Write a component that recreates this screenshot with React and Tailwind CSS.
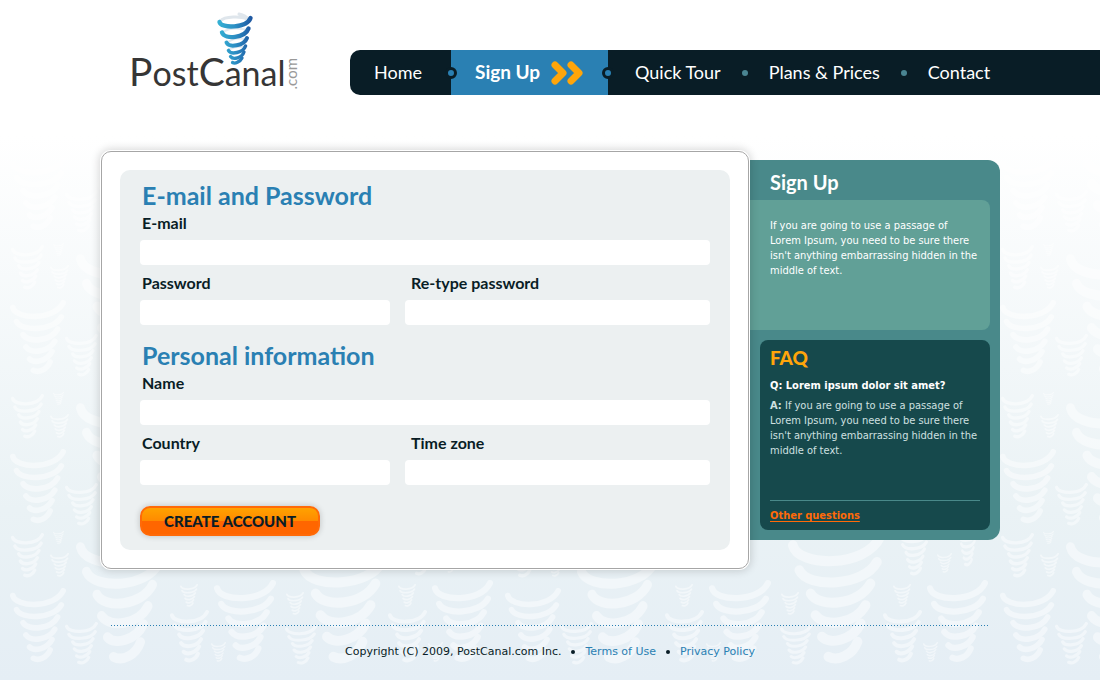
import React from "react";

const SWIRL = [
  "M3 8 C6 21 48 22 57 3",
  "M7 23 C12 34 47 33 55 18",
  "M14 37 C19 46 44 44 51 31",
  "M17 50 C23 58 42 55 48 44",
  "M21 63 C26 68 40 65 45 55",
  "M25 75 C31 78 40 74 43 66",
];

// x, y, width, height of every swirl in one horizontal repeat
const SWIRLS = [
  [11, 533, 33, 45],
  [53, 531, 11, 13],
  [50, 553, 19, 24],
  [10, 588, 56, 75],
  [65, 622, 33, 43],
  [76, 534, 90, 131],
  [180, 584, 18, 23],
  [170, 610, 39, 53],
  [211, 642, 15, 20],
  [214, 580, 62, 83],
  [286, 592, 18, 23],
  [285, 625, 32, 40],
  [293, 532, 97, 133],
  [398, 584, 18, 23],
  [388, 610, 39, 53],
  [428, 642, 15, 20],
  [432, 580, 61, 83],
  [404, 532, 30, 44],
  [442, 553, 15, 20],
  [461, 524, 22, 43],
];

function Backdrop() {
  return (
    <svg aria-hidden="true" className="absolute inset-0 h-full w-full">
      <defs>
        <symbol id="swirl" viewBox="0 0 60 80" preserveAspectRatio="none">
          <g fill="none" stroke="#fff" strokeWidth="6" strokeLinecap="round">
            {SWIRL.map((d) => (
              <path key={d} d={d} />
            ))}
          </g>
        </symbol>
        <pattern id="storm" width="495" height="680" patternUnits="userSpaceOnUse">
          {[0, -139, -288, -432].map((dy) =>
            SWIRLS.map(([x, y, w, h]) => (
              <use key={`${dy}-${x}-${y}`} href="#swirl" x={x} y={y + dy} width={w} height={h} />
            ))
          )}
        </pattern>
      </defs>
      <rect width="100%" height="100%" fill="url(#storm)" opacity="0.45" />
    </svg>
  );
}

function Logo() {
  return (
    <a href="#" aria-label="PostCanal.com" className="relative flex h-[95px] w-[221px] shrink-0 items-end text-[#363636]">
      <span className="font-['Lato',sans-serif] text-[34px] leading-[44px]">
        <span className="text-[39px]">P</span>ost<span className="text-[39px]">C</span>anal
      </span>
      <span className="mb-1.5 rotate-180 font-['Lato',sans-serif] text-[15px] leading-3 text-[#999] [writing-mode:vertical-rl]">
        .com
      </span>
      <svg aria-hidden="true" viewBox="0 0 38 54" className="absolute top-3 left-[87px] h-[54px] w-[38px]">
        <defs>
          <linearGradient id="ribbon" x1="0" y1="0" x2="38" y2="0" gradientUnits="userSpaceOnUse">
            <stop offset="0" stopColor="#36b5d6" />
            <stop offset="0.5" stopColor="#2c8fc4" />
            <stop offset="1" stopColor="#1c4f9c" />
          </linearGradient>
        </defs>
        <g fill="none" strokeLinecap="round">
          <path d="M4 9 C9 4 25 4 31 7 C32 5 27 3 23 2" stroke="#dfe6ec" strokeWidth="3" />
          <path d="M7 20 Q16 14 32 18 M12 30 Q19 25 30 27 M14 37 Q20 34 28 35" stroke="#e3ebf1" strokeWidth="2" />
          <g stroke="url(#ribbon)">
            <path d="M3.500 10 C5 17 31 16 34.500 6" strokeWidth="4.400" />
            <path d="M6 20.500 C9 28 29 26 32.500 16.500" strokeWidth="4.400" />
            <path d="M10.500 30.500 C13 36 28 34 31 26" strokeWidth="4" />
            <path d="M12.500 38.500 C15 43 27 41 29.500 34" strokeWidth="3.600" />
            <path d="M14.500 44.500 C17 48 26 46 28 40" strokeWidth="3.300" />
            <path d="M16.500 50.500 C19 52 24 50 26 46" strokeWidth="3.300" />
          </g>
        </g>
      </svg>
    </a>
  );
}

function Knob({ side }) {
  return (
    <span
      aria-hidden="true"
      className={`absolute top-1/2 size-3 -translate-y-1/2 rounded-full border-[3px] border-[#091d26] bg-[#2a80b3] ${
        side === "left" ? "-left-1.5" : "-right-1.5"
      }`}
    />
  );
}

function Dot() {
  return <span aria-hidden="true" className="size-1.5 shrink-0 rounded-full bg-[#4a8592]" />;
}

function Nav() {
  return (
    <nav className="mt-[50px] flex h-[45px] flex-1 items-center rounded-l-[10px] bg-[#091d26] font-['Lato',sans-serif] text-[18px] whitespace-nowrap text-white">
      <a href="#" className="w-[101px] pl-6">Home</a>
      <a href="#" aria-current="page" className="relative flex h-full w-[157px] items-center gap-[11px] bg-[#2a80b3] pl-6 text-[19px] font-bold">
        <Knob side="left" />
        Sign Up
        <svg aria-hidden="true" viewBox="0 0 32 24" className="h-6 w-8">
          <path
            d="M4 4 L12 12 L4 20 M20 4 L28 12 L20 20"
            fill="none"
            stroke="#ffa50a"
            strokeWidth="7"
            strokeLinecap="round"
            strokeLinejoin="round"
          />
        </svg>
        <Knob side="right" />
      </a>
      <div className="flex items-center gap-[21px] pl-[27px]">
        <a href="#">Quick Tour</a>
        <Dot />
        <a href="#">Plans &amp; Prices</a>
        <Dot />
        <a href="#">Contact</a>
      </div>
    </nav>
  );
}

function Field({ id, label, type = "text", inset = "pl-0.5" }) {
  return (
    <div className="min-w-0">
      <label htmlFor={id} className={`mb-2 block text-[16px] leading-[18px] font-bold text-[#091d26] ${inset}`}>
        {label}
      </label>
      <input id={id} type={type} className="block h-[25px] w-full rounded-[4px] bg-white px-2 text-sm outline-none" />
    </div>
  );
}

function Heading({ children }) {
  return <h2 className="mb-1.5 pl-0.5 text-[25px] leading-[26px] font-bold text-[#2a80b3]">{children}</h2>;
}

function SignUpForm() {
  return (
    <form className="rounded-[10px] bg-[#ecf0f1] px-5 pt-3 pb-3.5 font-['Lato',sans-serif]" onSubmit={(e) => e.preventDefault()}>
      <Heading>E-mail and Password</Heading>
      <Field id="email" label="E-mail" type="email" />
      <div className="mt-[9px] grid grid-cols-[250fr_305fr] gap-[15px]">
        <Field id="password" label="Password" type="password" />
        <Field id="retype" label="Re-type password" type="password" inset="pl-1.5" />
      </div>
      <div className="mt-[17px]">
        <Heading>Personal information</Heading>
        <Field id="name" label="Name" />
        <div className="mt-[9px] grid grid-cols-[250fr_305fr] gap-[15px]">
          <Field id="country" label="Country" />
          <Field id="zone" label="Time zone" inset="pl-1.5" />
        </div>
      </div>
      <button
        type="submit"
        className="mt-[21px] block h-[30px] w-[180px] rounded-[10px] border-2 border-[#ff6a08] bg-linear-to-b from-[#ffa200] from-0% via-[#ff8a00] via-50% to-[#ff6600] to-50% text-[15px] leading-5 font-black text-[#091d26] shadow-[0_0_6px_rgba(0,0,0,0.2)]"
      >
        CREATE ACCOUNT
      </button>
    </form>
  );
}

function Sidebar() {
  return (
    <aside className="mt-[9px] w-[250px] shrink-0 self-start rounded-r-[12px] bg-[#49898a] pb-2.5 font-['DejaVu_Sans_Condensed','DejaVu_Sans',sans-serif] text-[11px] leading-[15px]">
      <h2 className="pt-2.5 pb-1.5 pl-5 font-['Lato',sans-serif] text-[20px] leading-6 font-bold text-white">Sign Up</h2>
      <p className="mr-2.5 h-[130px] rounded-r-[8px] bg-[#61a097] pt-[18px] pl-5 whitespace-nowrap text-white">
        If you are going to use a passage of<br />
        Lorem Ipsum, you need to be sure there<br />
        isn't anything embarrassing hidden in the<br />
        middle of text.
      </p>
      <section className="mx-2.5 mt-2.5 flex h-[190px] flex-col rounded-[8px] bg-[#16494c] px-2.5 pt-1.5 text-[#cfe0e0]">
        <h2 className="font-['Lato',sans-serif] text-[19px] leading-6 font-black text-[#ffa50a]">FAQ</h2>
        <p className="mt-2 font-bold whitespace-nowrap text-white">Q: Lorem ipsum dolor sit amet?</p>
        <p className="mt-[5px] whitespace-nowrap">
          <b>A:</b> If you are going to use a passage of<br />
          Lorem Ipsum, you need to be sure there<br />
          isn't anything embarrassing hidden in the<br />
          middle of text.
        </p>
        <div className="mt-auto border-t border-[#49898a] pt-[7px] pb-[7px]">
          <a href="#" className="font-bold text-[#ff6a08] underline underline-offset-2">Other questions</a>
        </div>
      </section>
    </aside>
  );
}

function Bullet() {
  return <span aria-hidden="true" className="size-1 rounded-full bg-[#091d26]" />;
}

export default function App() {
  return (
    <div className="relative min-h-screen bg-linear-to-b from-white from-20% via-[#eaf2f5] via-75% to-[#e5eef5]">
      <Backdrop />
      <div className="relative">
        <header className="flex bg-white pl-[max(16px,calc(50%-421px))]">
          <Logo />
          <Nav />
        </header>
        <main className="mx-auto mt-14 flex max-w-[900px]">
          <div className="relative z-10 mx-px flex-1 rounded-[10px] border border-[#a6a6a6] bg-white p-[18px] shadow-[0_0_0_1px_#fff,0_0_8px_2px_rgba(0,0,0,0.16)]">
            <SignUpForm />
          </div>
          <Sidebar />
        </main>
        <footer className="mx-auto mt-14 max-w-[878px] font-['DejaVu_Sans',Verdana,sans-serif] text-[11px] leading-4 text-[#091d26]">
          <svg aria-hidden="true" className="block h-px w-full">
            <line x1="0" y1="0.5" x2="100%" y2="0.5" stroke="#2a80b3" strokeDasharray="1 2" />
          </svg>
          <div className="flex items-center justify-center gap-2.5 pt-[18px] pb-5">
            <span>Copyright (C) 2009, PostCanal.com Inc.</span>
            <Bullet />
            <a href="#" className="text-[#2a80b3]">Terms of Use</a>
            <Bullet />
            <a href="#" className="text-[#2a80b3]">Privacy Policy</a>
          </div>
        </footer>
      </div>
    </div>
  );
}
